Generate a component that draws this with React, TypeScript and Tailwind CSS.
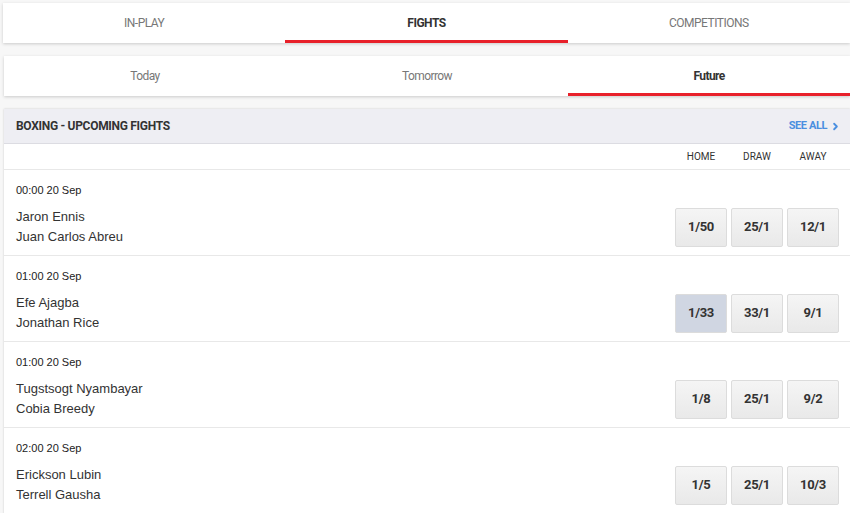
import { ChevronRight } from "lucide-react";

type Fight = {
  time: string;
  home: string;
  away: string;
  odds: [string, string, string];
  selected?: number;
};

const fights: Fight[] = [
  { time: "00:00 20 Sep", home: "Jaron Ennis", away: "Juan Carlos Abreu", odds: ["1/50", "25/1", "12/1"] },
  { time: "01:00 20 Sep", home: "Efe Ajagba", away: "Jonathan Rice", odds: ["1/33", "33/1", "9/1"], selected: 0 },
  { time: "01:00 20 Sep", home: "Tugstsogt Nyambayar", away: "Cobia Breedy", odds: ["1/8", "25/1", "9/2"] },
  { time: "02:00 20 Sep", home: "Erickson Lubin", away: "Terrell Gausha", odds: ["1/5", "25/1", "10/3"] },
];

const roboto = "font-['Roboto',sans-serif]";

function TabBar({ tabs, active, upper }: { tabs: string[]; active: number; upper?: boolean }) {
  return (
    <div className="flex h-10 bg-white shadow-[0_1px_3px_rgba(0,0,0,0.18)]">
      {tabs.map((t, i) => (
        <div
          key={t}
          className={`relative flex flex-1 items-center justify-center text-[12px] ${roboto} ${
            upper ? "tracking-[-0.5px]" : "tracking-[-0.6px]"
          } ${i === active ? "font-bold text-[#333] " : "text-[#777]"}`}
        >
          {t}
          {i === active && <div className="absolute bottom-0 left-0 right-0 h-[3px] bg-[#e8202a]" />}
        </div>
      ))}
    </div>
  );
}

function OddsButton({ value, selected }: { value: string; selected?: boolean }) {
  return (
    <button
      className={`h-[39px] w-[52px] rounded-[2px] border border-[#dcdcdc] text-[13px] font-bold tracking-[-0.3px] text-[#333] ${roboto} ${
        selected ? "bg-[#d0d6e2]" : "bg-gradient-to-b from-[#f5f5f5] to-[#e9e9e9]"
      }`}
    >
      {value}
    </button>
  );
}

export default function App() {
  return (
    <div className="min-h-screen bg-[#f7f7f7] pb-4">
      <div className="ml-[3px] pt-[3px]">
        <TabBar tabs={["IN-PLAY", "FIGHTS", "COMPETITIONS"]} active={1} upper />
      </div>
      <div className="ml-[4px] mt-[13px]">
        <TabBar tabs={["Today", "Tomorrow", "Future"]} active={2} />
      </div>

      <div className="ml-[4px] mt-[13px] bg-white shadow-[0_0_2px_rgba(0,0,0,0.18)]">
        <div className={`flex h-[35px] items-center justify-between border-b border-[#dcdce2] bg-[#eeeef3] pl-3 pr-[9px] ${roboto}`}>
          <span className="text-[12px] font-bold tracking-[-0.3px] text-[#333]">BOXING - UPCOMING FIGHTS</span>
          <span className="flex items-center gap-[3px] text-[11px] font-bold tracking-[-0.4px] text-[#4a8fe0]">
            SEE ALL
            <ChevronRight size={11} strokeWidth={4} />
          </span>
        </div>

        <div className={`flex h-[26px] items-center justify-end gap-1 border-b border-[#e8e8e8] pr-[11px] text-[10px] text-[#333] ${roboto}`}>
          <span className="w-[52px] text-center">HOME</span>
          <span className="w-[52px] text-center">DRAW</span>
          <span className="w-[52px] text-center">AWAY</span>
        </div>

        {fights.map((f, idx) => (
          <div key={idx} className="border-b border-[#e8e8e8] pl-3 pr-[11px] pt-[13px] pb-[8px] font-['Liberation_Sans',Arial,sans-serif]">
            <div className="text-[11px] leading-[14px] text-[#222]">{f.time}</div>
            <div className="mt-[10px] flex items-center justify-between">
              <div className="text-[13px] leading-5 text-[#333]">
                <div>{f.home}</div>
                <div>{f.away}</div>
              </div>
              <div className="flex gap-1">
                {f.odds.map((o, i) => (
                  <OddsButton key={i} value={o} selected={f.selected === i} />
                ))}
              </div>
            </div>
          </div>
        ))}
      </div>
    </div>
  );
}
